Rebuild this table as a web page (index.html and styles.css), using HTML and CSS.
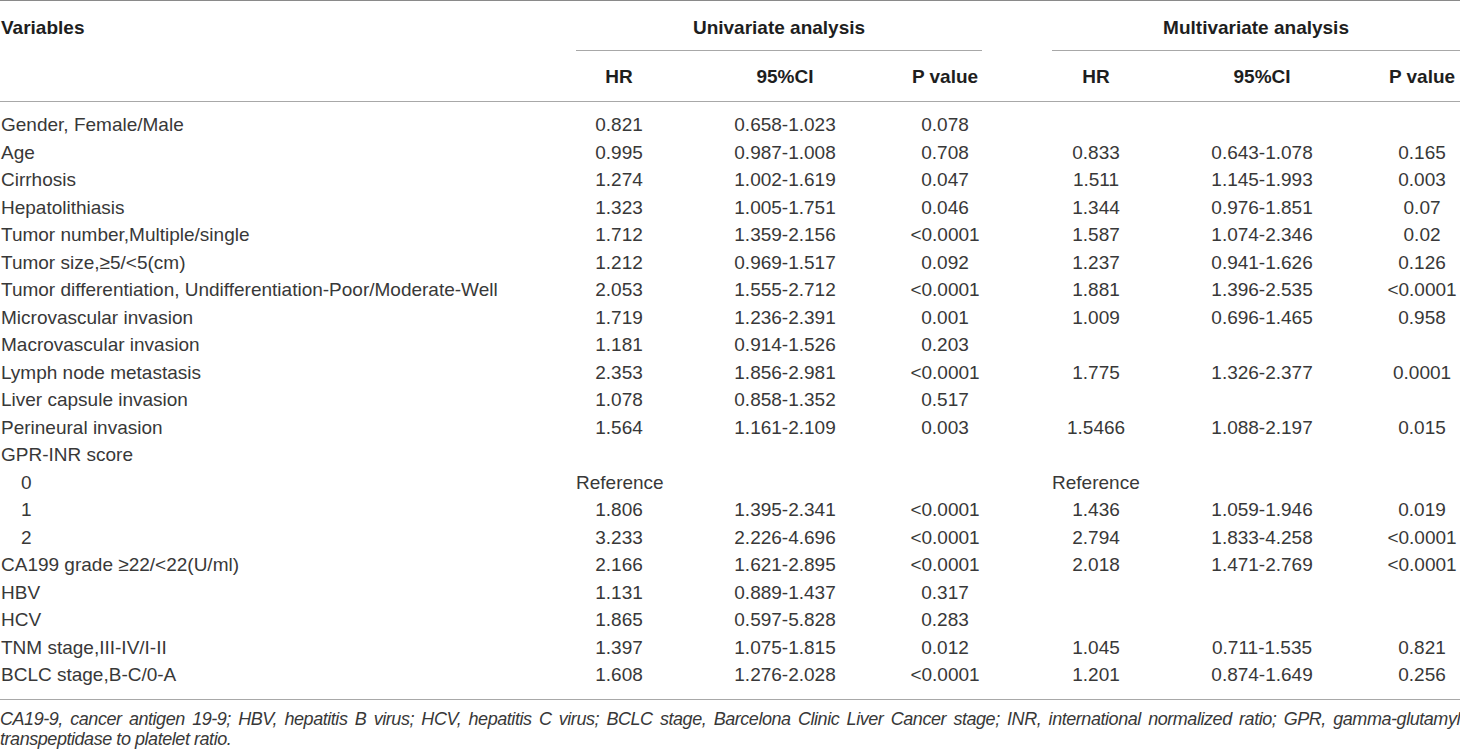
FILE: index.html
```html
<!DOCTYPE html>
<html lang="en">
<head>
<meta charset="utf-8">
<title>Cox regression analysis</title>
<link rel="stylesheet" href="styles.css">
</head>
<body>
<div class="wrap">
<table class="cox">
  <colgroup>
    <col class="c-var">
    <col class="c-hr">
    <col class="c-ci">
    <col class="c-p">
    <col class="c-gap">
    <col class="c-hr2">
    <col class="c-ci2">
    <col class="c-p2">
  </colgroup>
  <thead>
    <tr class="h1">
      <th class="var" rowspan="2">Variables</th>
      <th class="grp" colspan="3">Univariate analysis</th>
      <th class="gap"></th>
      <th class="grp" colspan="3">Multivariate analysis</th>
    </tr>
    <tr class="h2">
      <th>HR</th><th>95%CI</th><th>P value</th>
      <th class="gap"></th>
      <th>HR</th><th>95%CI</th><th>P value</th>
    </tr>
  </thead>
  <tbody>
    <tr><td class="var">Gender, Female/Male</td><td>0.821</td><td>0.658-1.023</td><td>0.078</td><td></td><td></td><td></td><td></td></tr>
    <tr><td class="var">Age</td><td>0.995</td><td>0.987-1.008</td><td>0.708</td><td></td><td>0.833</td><td>0.643-1.078</td><td>0.165</td></tr>
    <tr><td class="var">Cirrhosis</td><td>1.274</td><td>1.002-1.619</td><td>0.047</td><td></td><td>1.511</td><td>1.145-1.993</td><td>0.003</td></tr>
    <tr><td class="var">Hepatolithiasis</td><td>1.323</td><td>1.005-1.751</td><td>0.046</td><td></td><td>1.344</td><td>0.976-1.851</td><td>0.07</td></tr>
    <tr><td class="var">Tumor number,Multiple/single</td><td>1.712</td><td>1.359-2.156</td><td>&lt;0.0001</td><td></td><td>1.587</td><td>1.074-2.346</td><td>0.02</td></tr>
    <tr><td class="var">Tumor size,≥5/&lt;5(cm)</td><td>1.212</td><td>0.969-1.517</td><td>0.092</td><td></td><td>1.237</td><td>0.941-1.626</td><td>0.126</td></tr>
    <tr><td class="var">Tumor differentiation, Undifferentiation-Poor/Moderate-Well</td><td>2.053</td><td>1.555-2.712</td><td>&lt;0.0001</td><td></td><td>1.881</td><td>1.396-2.535</td><td>&lt;0.0001</td></tr>
    <tr><td class="var">Microvascular invasion</td><td>1.719</td><td>1.236-2.391</td><td>0.001</td><td></td><td>1.009</td><td>0.696-1.465</td><td>0.958</td></tr>
    <tr><td class="var">Macrovascular invasion</td><td>1.181</td><td>0.914-1.526</td><td>0.203</td><td></td><td></td><td></td><td></td></tr>
    <tr><td class="var">Lymph node metastasis</td><td>2.353</td><td>1.856-2.981</td><td>&lt;0.0001</td><td></td><td>1.775</td><td>1.326-2.377</td><td>0.0001</td></tr>
    <tr><td class="var">Liver capsule invasion</td><td>1.078</td><td>0.858-1.352</td><td>0.517</td><td></td><td></td><td></td><td></td></tr>
    <tr><td class="var">Perineural invasion</td><td>1.564</td><td>1.161-2.109</td><td>0.003</td><td></td><td>1.5466</td><td>1.088-2.197</td><td>0.015</td></tr>
    <tr><td class="var">GPR-INR score</td><td></td><td></td><td></td><td></td><td></td><td></td><td></td></tr>
    <tr><td class="var sub">0</td><td class="ref">Reference</td><td></td><td></td><td></td><td class="ref">Reference</td><td></td><td></td></tr>
    <tr><td class="var sub">1</td><td>1.806</td><td>1.395-2.341</td><td>&lt;0.0001</td><td></td><td>1.436</td><td>1.059-1.946</td><td>0.019</td></tr>
    <tr><td class="var sub">2</td><td>3.233</td><td>2.226-4.696</td><td>&lt;0.0001</td><td></td><td>2.794</td><td>1.833-4.258</td><td>&lt;0.0001</td></tr>
    <tr><td class="var">CA199 grade ≥22/&lt;22(U/ml)</td><td>2.166</td><td>1.621-2.895</td><td>&lt;0.0001</td><td></td><td>2.018</td><td>1.471-2.769</td><td>&lt;0.0001</td></tr>
    <tr><td class="var">HBV</td><td>1.131</td><td>0.889-1.437</td><td>0.317</td><td></td><td></td><td></td><td></td></tr>
    <tr><td class="var">HCV</td><td>1.865</td><td>0.597-5.828</td><td>0.283</td><td></td><td></td><td></td><td></td></tr>
    <tr><td class="var">TNM stage,III-IV/I-II</td><td>1.397</td><td>1.075-1.815</td><td>0.012</td><td></td><td>1.045</td><td>0.711-1.535</td><td>0.821</td></tr>
    <tr><td class="var">BCLC stage,B-C/0-A</td><td>1.608</td><td>1.276-2.028</td><td>&lt;0.0001</td><td></td><td>1.201</td><td>0.874-1.649</td><td>0.256</td></tr>
  </tbody>
</table>
<p class="note">CA19-9, cancer antigen 19-9; HBV, hepatitis B virus; HCV, hepatitis C virus; BCLC stage, Barcelona Clinic Liver Cancer stage; INR, international normalized ratio; GPR, <span class="nb">gamma-glutamyl</span> transpeptidase to platelet ratio.</p>
</div>
</body>
</html>
```

FILE: styles.css
```css
html, body {
  margin: 0;
  padding: 0;
  background: #ffffff;
}

.wrap {
  width: 1460px;
  font-family: "Liberation Sans", Arial, sans-serif;
  color: #383838;
}

.cox {
  width: 1460px;
  border-collapse: separate;
  border-spacing: 0;
  table-layout: fixed;
  font-size: 19px;
}

.c-var { width: 576px; }
.c-hr  { width: 86px; }
.c-ci  { width: 246px; }
.c-p   { width: 74px; }
.c-gap { width: 70px; }
.c-hr2 { width: 88px; }
.c-ci2 { width: 244px; }
.c-p2  { width: 76px; }

.cox th {
  font-weight: bold;
  color: #1e1e1e;
  text-align: center;
  padding: 0;
  line-height: 22px;
}

.cox .h1 {
  height: 51px;
}

.cox .h1 th {
  border-top: 1px solid #8a8a8a;
  padding-top: 4px;
  vertical-align: middle;
}

.cox .h1 th.grp {
  border-bottom: 1px solid #a8a8a8;
}

.cox th.var {
  text-align: left;
  vertical-align: top;
  padding-top: 16px;
  padding-left: 1px;
  border-bottom: 1px solid #a8a8a8;
}

.cox .h2 {
  height: 51px;
}

.cox .h2 th {
  vertical-align: middle;
  padding-top: 1px;
  border-bottom: 1px solid #a8a8a8;
}

.cox td {
  padding: 0;
  height: 27.5px;
  line-height: 27.5px;
  text-align: center;
  white-space: nowrap;
}

.cox td.var {
  text-align: left;
  padding-left: 1px;
}

.cox td.sub {
  padding-left: 21px;
}

.cox td.ref {
  text-align: left;
  overflow: visible;
}

.cox tbody tr:first-child td {
  padding-top: 9px;
}

.cox tbody tr:last-child td {
  padding-bottom: 10px;
  border-bottom: 1px solid #a8a8a8;
}

.note {
  margin: 9px 0 0 0;
  font-style: italic;
  font-size: 18px;
  line-height: 20px;
  letter-spacing: -0.45px;
  text-align: justify;
  color: #383838;
}

.nb {
  white-space: nowrap;
}
```
